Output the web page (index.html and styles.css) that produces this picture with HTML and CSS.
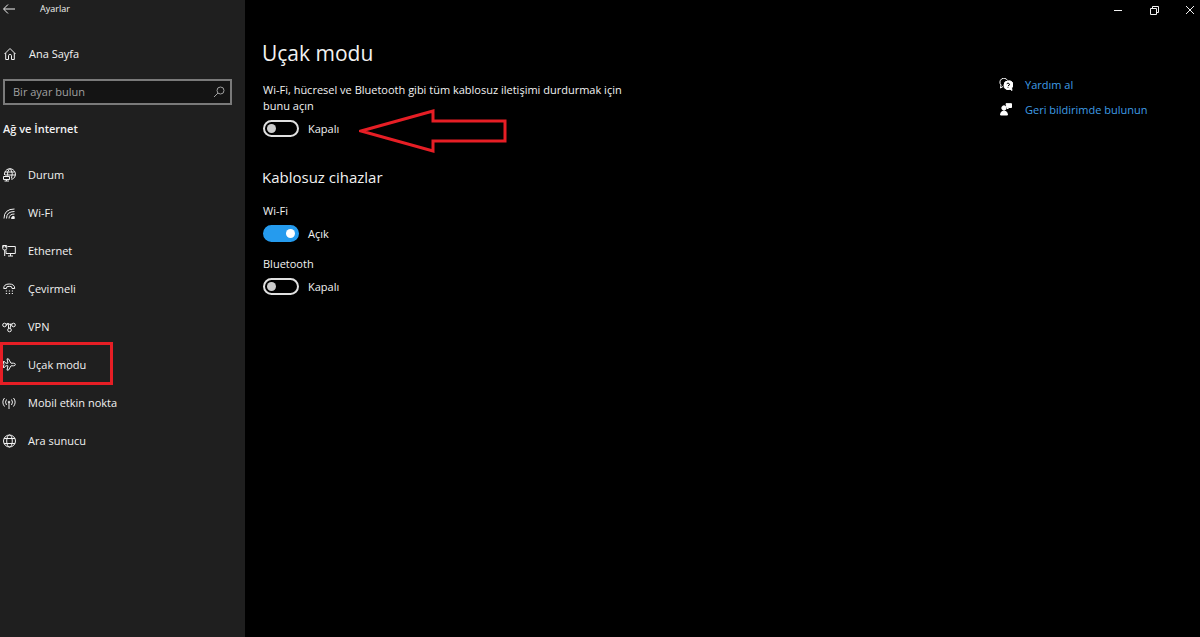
FILE: index.html
```html
<!DOCTYPE html>
<html lang="tr">
<head>
  <meta charset="UTF-8">
  <meta name="viewport" content="width=device-width, initial-scale=1.0">
  <title>Ayarlar</title>
  <link rel="stylesheet" href="styles.css">
</head>
<body>
  <!-- Sidebar -->
  <div class="sidebar">
    <div class="app-bar">
      <button class="icon-btn" aria-label="Geri">
        <svg class="icon" viewBox="0 0 14 14"><path d="M13 7H2M6 2.500L1.500 7L6 11.500"/></svg>
      </button>
      <span>Ayarlar</span>
    </div>

    <a class="home" href="#">
      <svg class="icon" viewBox="0 0 14 14"><path d="M1.500 7L7 1.500L12.500 7M2.700 6V12.500H5.500V8.500Q5.500 7.500 7 7.500T8.500 8.500V12.500H11.300V6"/></svg>
      <span>Ana Sayfa</span>
    </a>

    <div class="search">
      <input type="text" placeholder="Bir ayar bulun" aria-label="Bir ayar bulun">
      <svg class="icon" viewBox="0 0 14 14"><circle cx="8.500" cy="5.500" r="3.500"/><path d="M6 8L2 12"/></svg>
    </div>

    <h2 class="group-title">Ağ ve İnternet</h2>

    <nav class="menu">
      <a href="#">
        <svg class="icon" viewBox="0 0 14 14"><path d="M2.500 7A5.500 5.500 0 1 1 9.500 11.500M3 4H12.500M3 7H13.300M7.500 .7Q5 3.500 5.500 7.500M8.500 .7Q11.500 5 9.500 10.500M1.500 8.500H7.500V11.500H1.500ZM4.500 11.500V13M2.500 13H7"/></svg>
        <span>Durum</span>
      </a>
      <a href="#">
        <svg class="icon" viewBox="0 0 14 14"><path d="M2 12.500Q2 3 12.500 3M4.500 12.500Q4.500 5.500 12.500 5.500M7 12.500Q7 8 12.500 8"/><path d="M9.500 12.500Q9.500 10.300 12 10.300L12.300 12.500Z" class="solid"/></svg>
        <span>Wi-Fi</span>
      </a>
      <a href="#">
        <svg class="icon" viewBox="0 0 14 14"><path d="M5.500 2.500H13.300V9.500H4V6.500M8.500 9.500V12M6 12H11M.7 1.500H4.700V4.500Q4.700 6 2.700 6T.7 4.500ZM2.700 6V12M1.800 1.500V3.500M3.600 1.500V3.500"/></svg>
        <span>Ethernet</span>
      </a>
      <a href="#">
        <svg class="icon" viewBox="0 0 14 14"><path d="M1.700 6.500Q1.700 2 7.200 2T12.700 6.500H10L9.500 4.700Q7.200 4 4.900 4.700L4.400 6.500Z"/><path stroke-dasharray="1.300 1.700" d="M3.800 9H11M3.800 11.500H11"/></svg>
        <span>Çevirmeli</span>
      </a>
      <a href="#">
        <svg class="icon" viewBox="0 0 14 14"><circle cx="2.500" cy="5" r="1.800"/><circle cx="7.500" cy="10" r="1.800"/><circle cx="11.500" cy="5" r="1.800"/><path d="M4.200 5.700Q5.500 2 7 3.800T9.700 5M4.300 4Q7 3 6.500 6T7.500 8.200M9.700 4Q8 3 8.500 5.500T7.800 8.200"/></svg>
        <span>VPN</span>
      </a>
      <a class="marked" href="#">
        <svg class="icon" viewBox="0 0 14 14"><path d="M13.300 6.500Q13.300 5.200 11.500 5.200H9L6.500 .9H5L6 5.200H3.700L2.500 3.500H1.200L2 6.500L1.200 9.500H2.500L3.700 7.800H6L5 12.100H6.500L9 7.800H11.500Q13.300 7.800 13.300 6.500Z"/></svg>
        <span>Uçak modu</span>
      </a>
      <a href="#">
        <svg class="icon" viewBox="0 0 14 14"><path d="M2.500 2Q-.8 6 2.500 10.500M4.500 3.500Q2.500 6 4.500 9M11.500 2Q14.800 6 11.500 10.500M9.500 3.500Q11.500 6 9.500 9M7 6V13"/><circle cx="7" cy="6" r=".8"/></svg>
        <span>Mobil etkin nokta</span>
      </a>
      <a href="#">
        <svg class="icon" viewBox="0 0 14 14"><circle cx="7.500" cy="7" r="6"/><ellipse cx="7.500" cy="7" rx="2.800" ry="6"/><path d="M2 4.500H13M2 9.500H13"/></svg>
        <span>Ara sunucu</span>
      </a>
    </nav>
  </div>

  <!-- Page -->
  <div class="page">
    <div class="window-controls">
      <button class="icon-btn" aria-label="Simge durumuna küçült">
        <svg class="icon" viewBox="0 0 14 14"><path d="M3 7.500H11"/></svg>
      </button>
      <button class="icon-btn" aria-label="Önceki boyut">
        <svg class="icon" viewBox="0 0 14 14"><path d="M3.500 5.500H9.500V11.500H3.500ZM5.500 5.500V3.500H11.500V9.500H9.500"/></svg>
      </button>
      <button class="icon-btn" aria-label="Kapat">
        <svg class="icon" viewBox="0 0 14 14"><path d="M3 3L11 11M11 3L3 11"/></svg>
      </button>
    </div>

    <div class="content">
      <main>
        <h1>Uçak modu</h1>
        <p>Wi-Fi, hücresel ve Bluetooth gibi tüm kablosuz iletişimi durdurmak için bunu açın</p>
        <div class="switch-row">
          <input type="checkbox" class="switch" id="airplane" aria-label="Uçak modu">
          <label for="airplane">Kapalı</label>
          <svg class="arrow" viewBox="0 0 148 44"><path d="M2 22L74 2V12H146V32H74V42Z"/></svg>
        </div>

        <h2>Kablosuz cihazlar</h2>
        <div class="device">
          <div class="device-name">Wi-Fi</div>
          <div class="switch-row">
            <input type="checkbox" class="switch" id="wifi" aria-label="Wi-Fi" checked>
            <label for="wifi">Açık</label>
          </div>
        </div>
        <div class="device">
          <div class="device-name">Bluetooth</div>
          <div class="switch-row">
            <input type="checkbox" class="switch" id="bluetooth" aria-label="Bluetooth">
            <label for="bluetooth">Kapalı</label>
          </div>
        </div>
      </main>

      <aside class="help">
        <a href="#">
          <svg class="icon" viewBox="0 0 14 14"><path d="M4 8.500L1.500 10L2 7A4 4 0 1 1 8.500 2.500"/><path class="solid" d="M9 3A4 4 0 1 1 10.500 10.800L13 12.500L12.500 9.500A4 4 0 0 1 5 7A4 4 0 0 1 9 3Z"/><path class="cut" d="M7.700 5.800Q9 4.300 10.200 5.700T9 7.800M9 8.800V9.700"/></svg>
          <span>Yardım al</span>
        </a>
        <a href="#">
          <svg class="icon" viewBox="0 0 14 14"><circle class="solid" cx="5" cy="5" r="2.200"/><path class="solid" d="M1.500 12Q1.500 8 5 8T8.500 12ZM7 .7H12.500V4.500H10L8.500 6V4.500H7.800Z"/></svg>
          <span>Geri bildirimde bulunun</span>
        </a>
      </aside>
    </div>
  </div>
</body>
</html>
```
FILE: styles.css
```css
* {
  box-sizing: border-box;
}

body {
  display: flex;
  min-height: 100vh;
  margin: 0;
  background: #000;
  color: #f2f2f2;
  font-family: "Open Sans", "Noto Sans", sans-serif;
  font-size: 11px;
  line-height: 16px;
}

a {
  color: inherit;
  text-decoration: none;
}

h1, h2, p {
  margin: 0;
}

.icon {
  display: block;
  flex: none;
  width: 14px;
  height: 14px;
  fill: none;
  stroke: currentColor;
  stroke-width: 1;
}

.icon .solid {
  fill: currentColor;
}

.icon .cut {
  stroke: #000;
}

.icon-btn {
  padding: 0;
  border: none;
  background: none;
  color: inherit;
}

/* Sidebar */
.sidebar {
  flex: none;
  width: 245px;
  background: #1f1f1f;
}

.app-bar {
  display: flex;
  align-items: center;
  gap: 24px;
  height: 18px;
  padding-left: 2px;
  font-size: 9px;
}

.home {
  display: flex;
  align-items: center;
  gap: 12px;
  height: 24px;
  margin-top: 24px;
  padding-left: 3px;
}

.search {
  display: flex;
  align-items: center;
  height: 26px;
  margin: 13px 13px 0 3px;
  padding: 0 4px 0 8px;
  border: 2px solid #7a7a7a;
  background: #141414;
  color: #a0a0a0;
}

.search input {
  flex: 1;
  min-width: 0;
  padding: 0;
  border: none;
  outline: none;
  background: none;
  color: inherit;
  font: inherit;
}

.search input::placeholder {
  color: #a0a0a0;
}

.group-title {
  margin-top: 16px;
  padding-left: 3px;
  font-size: 11px;
  font-weight: 600;
}

.menu {
  margin-top: 19px;
}

.menu a {
  display: flex;
  align-items: center;
  gap: 12px;
  height: 38px;
  padding-left: 2px;
}

.menu .marked {
  position: relative;
}

/* Red frame round the marked entry */
.marked::after {
  content: "";
  box-sizing: border-box;
  position: absolute;
  top: -4px;
  left: 0;
  width: 113px;
  height: 43px;
  border: 3px solid #e61e25;
}

/* Page */
.page {
  flex: 1;
}

.window-controls {
  display: flex;
  justify-content: flex-end;
  gap: 22px;
  height: 18px;
  padding: 2px 3px 0 0;
}

.content {
  display: flex;
  justify-content: space-between;
  padding: 20px 0 0 17px;
}

main {
  max-width: 370px;
}

h1 {
  margin-bottom: 14px;
  font-size: 21px;
  font-weight: 400;
  line-height: 30px;
}

main h2 {
  margin: 28px 0 14px;
  font-size: 15px;
  font-weight: 400;
  line-height: 24px;
}

.switch-row {
  display: flex;
  align-items: center;
  gap: 9px;
  position: relative;
  height: 17px;
  margin-top: 6px;
  padding-left: 1px;
}

main p,
.device-name {
  padding-left: 1px;
}

.device {
  margin-bottom: 14px;
}

.switch {
  display: flex;
  align-items: center;
  appearance: none;
  width: 36px;
  height: 17px;
  margin: 0;
  padding: 0 2px;
  border: 2px solid #e0e0e0;
  border-radius: 9px;
}

.switch::before {
  content: "";
  width: 9px;
  height: 9px;
  border-radius: 50%;
  background: #ccc;
}

.switch:checked {
  justify-content: flex-end;
  border-color: #259bee;
  background: #259bee;
}

.switch:checked::before {
  background: #fff;
}

.arrow {
  position: absolute;
  left: 97px;
  top: -11px;
  width: 148px;
  height: 44px;
  fill: none;
  stroke: #e61e25;
  stroke-width: 3;
}

.help {
  width: 201px;
  padding-top: 34px;
}

.help a {
  display: flex;
  align-items: center;
  gap: 12px;
  height: 25px;
  color: #3f9de6;
}

.help .icon {
  color: #fff;
}
```
